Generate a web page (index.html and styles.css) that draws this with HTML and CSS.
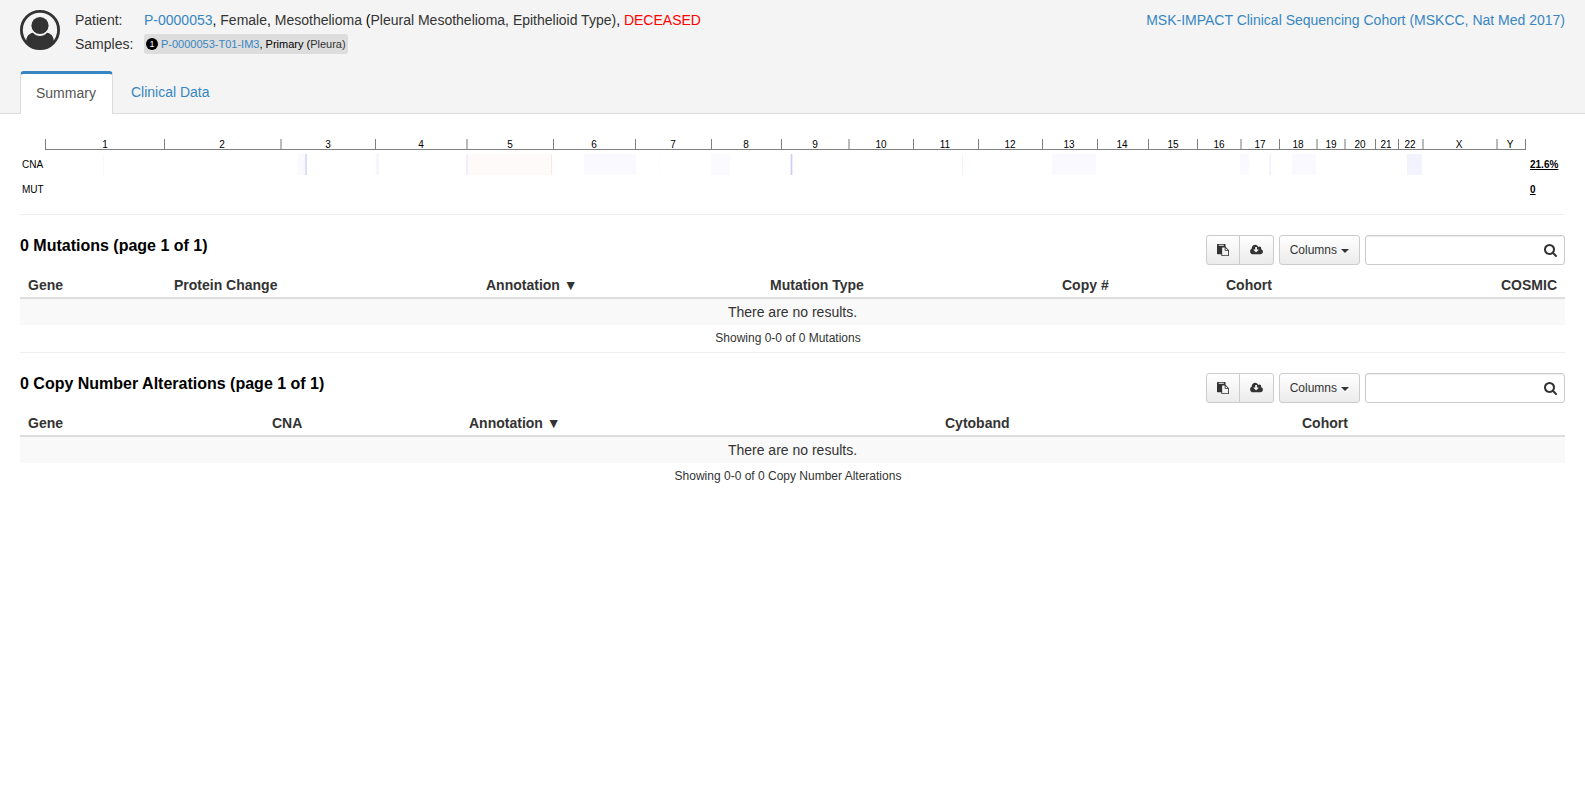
FILE: index.html
```html
<!DOCTYPE html>
<html lang="en">
<head>
<meta charset="utf-8">
<title>Patient P-0000053</title>
<link rel="stylesheet" href="styles.css">
</head>
<body>
<svg class="sprite" aria-hidden="true">
  <symbol id="i-paste" viewBox="0 0 1792 1792"><path d="M768 1664h896v-640h-416q-40 0-68-28t-28-68v-416h-384v1152zm256-1440v-64q0-13-9.500-22.500t-22.500-9.500h-704q-13 0-22.500 9.500t-9.500 22.500v64q0 13 9.500 22.500t22.500 9.500h704q13 0 22.500-9.500t9.500-22.500zm256 672h299l-299-299v299zm512 128v672q0 40-28 68t-68 28h-960q-40 0-68-28t-28-68v-160h-544q-40 0-68-28t-28-68v-1344q0-40 28-68t68-28h1088q40 0 68 28t28 68v328q21 13 36 28l408 408q28 28 48 76t20 88z"/></symbol>
  <symbol id="i-cloud" viewBox="0 128 1920 1792"><path d="M1280 992q0-14-9-23t-23-9h-224v-352q0-13-9.500-22.500t-22.500-9.500h-192q-13 0-22.500 9.500t-9.500 22.500v352h-224q-13 0-22.500 9.500t-9.500 22.500q0 14 9 23l352 352q9 9 23 9t23-9l351-351q10-12 10-24zm640 288q0 159-112.500 271.500t-271.500 112.500h-1088q-185 0-316.500-131.500t-131.500-316.500q0-130 70-240t188-165q-2-30-2-43 0-212 150-362t362-150q156 0 285.500 87t188.500 231q71-62 166-62 106 0 181 75t75 181q0 76-41 138 130 31 213.500 135.500t83.500 238.500z"/></symbol>
  <symbol id="i-search" viewBox="0 0 1664 1664"><path d="M1152 704q0-185-131.500-316.500t-316.500-131.500-316.500 131.500-131.500 316.500 131.500 316.500 316.500 131.500 316.500-131.500 131.500-316.500zm512 832q0 52-38 90t-90 38q-54 0-90-38l-343-342q-179 124-399 124-143 0-273.500-55.500t-225-150-150-225-55.500-273.500 55.500-273.500 150-225 225-150 273.500-55.500 273.500 55.500 225 150 150 225 55.500 273.500q0 220-124 399l343 343q37 37 37 90z"/></symbol>
</svg>

<header class="page-header">
  <div class="patient">
    <svg class="avatar" viewBox="0 0 40 40" aria-hidden="true">
      <defs><clipPath id="disc"><circle cx="20" cy="20" r="19"/></clipPath></defs>
      <circle class="avatar-ring" cx="20" cy="20" r="18.600"/>
      <circle cx="20" cy="15.500" r="8.600"/>
      <path clip-path="url(#disc)" d="M6 36V32C6.500 26 9 23.500 13 22.800C15 25 17.500 26 20 26S25 25 27 22.800C31 23.500 33.500 26 34 32V36L28 40H12Z"/>
    </svg>
    <dl class="facts">
      <dt>Patient:</dt>
      <dd><a href="#">P-0000053</a><b class="punct">, </b>Female<b class="punct">, </b>Mesothelioma <b class="punct">(</b>Pleural Mesothelioma, Epithelioid Type)<b class="punct">, </b><span class="deceased">DECEASED</span></dd>
      <dt>Samples:</dt>
      <dd><span class="sample"><svg class="sample-dot" viewBox="0 0 12 12"><circle cx="6" cy="6" r="6"/><text x="6" y="9">1</text></svg><span><a href="#">P-0000053-T01-IM3</a>, Primary (<span class="site">Pleura)</span></span></span></dd>
    </dl>
    <a class="study" href="#">MSK-IMPACT Clinical Sequencing Cohort (MSKCC, Nat Med 2017)</a>
  </div>
  <nav class="tabs">
    <a class="tab active" href="#">Summary</a>
    <a class="tab" href="#">Clinical Data</a>
  </nav>
</header>

<main>
  <svg class="genome" viewBox="0 0 1545 80" role="img" aria-label="Genome overview">
    <g class="ticks">
      <path d="M25 5h1v10h-1zM144 5h1v10h-1zM355 5h1v10h-1zM533 5h1v10h-1zM615 5h1v10h-1zM691 5h1v10h-1zM761 5h1v10h-1zM893 5h1v10h-1zM958 5h1v10h-1zM1022 5h1v10h-1zM1077 5h1v10h-1zM1128 5h1v10h-1zM1177 5h1v10h-1zM1259 5h1v10h-1zM1355 5h1v10h-1zM1378 5h1v10h-1zM1505 5h1v10h-1z"/>
      <path d="M25 15h1481v1H25z"/>
      <path class="soft" d="M260 5h2v10h-2zM446 5h2v10h-2zM828 5h2v10h-2zM1220 5h2v10h-2zM1296 5h2v10h-2zM1324 5h2v10h-2zM1402 5h2v10h-2zM1476 5h2v10h-2z"/>
    </g>
    <g class="chromosomes">
      <text x="85" y="14">1</text><text x="202" y="14">2</text><text x="308" y="14">3</text><text x="401" y="14">4</text><text x="490" y="14">5</text><text x="574" y="14">6</text><text x="653" y="14">7</text><text x="726" y="14">8</text><text x="795" y="14">9</text><text x="861" y="14">10</text><text x="925" y="14">11</text><text x="990" y="14">12</text><text x="1049" y="14">13</text><text x="1102" y="14">14</text><text x="1153" y="14">15</text><text x="1199" y="14">16</text><text x="1240" y="14">17</text><text x="1278" y="14">18</text><text x="1311" y="14">19</text><text x="1340" y="14">20</text><text x="1366" y="14">21</text><text x="1390" y="14">22</text><text x="1439" y="14">X</text><text x="1490" y="14">Y</text>
    </g>
    <text x="2" y="34">CNA</text>
    <text x="2" y="59">MUT</text>
    <g>
      <rect x="83" y="20" width="1" height="21" fill="#f8f8fc"/>
      <rect x="278" y="20" width="7" height="21" fill="#f9f9ff"/>
      <rect x="285" y="20" width="2" height="21" fill="#dcdcfc"/>
      <rect x="356" y="20" width="3" height="21" fill="#f6f6ff"/>
      <rect x="446" y="20" width="2" height="21" fill="#f1effd"/>
      <rect x="448" y="20" width="83" height="21" fill="#fefaf9"/>
      <rect x="531" y="20" width="1" height="21" fill="#fbe6e9"/>
      <rect x="564" y="20" width="52" height="21" fill="#f9f9ff"/>
      <rect x="639" y="20" width="1" height="21" fill="#fafaff"/>
      <rect x="691" y="20" width="19" height="21" fill="#fbfbff"/>
      <rect x="770" y="20" width="3" height="21" fill="#ededff"/>
      <rect x="771" y="20" width="1" height="21" fill="#ccccf6"/>
      <rect x="942" y="20" width="1" height="21" fill="#fdf0f1"/>
      <rect x="1032" y="20" width="44" height="21" fill="#f9f9ff"/>
      <rect x="1220" y="20" width="9" height="21" fill="#f9f9ff"/>
      <rect x="1249" y="20" width="2" height="21" fill="#f3f3ff"/>
      <rect x="1272" y="20" width="24" height="21" fill="#f9f9ff"/>
      <rect x="1387" y="20" width="15" height="21" fill="#f3f3ff"/>
    </g>
    <g class="totals"><text x="1510" y="34">21.6%</text><text x="1510" y="59">0</text></g>
  </svg>

  <section class="panel">
    <div class="panel-bar">
      <h2>0 Mutations (page 1 of 1)</h2>
      <div class="tools">
        <div class="group">
          <button type="button" class="btn" aria-label="Copy"><svg class="icon"><use href="#i-paste"/></svg></button>
          <button type="button" class="btn" aria-label="Download"><svg class="icon wide"><use href="#i-cloud"/></svg></button>
        </div>
        <button type="button" class="btn">Columns <span class="caret"></span></button>
        <label class="search"><input type="text" aria-label="Search mutations"><svg class="icon glass"><use href="#i-search"/></svg></label>
      </div>
    </div>
    <table>
      <colgroup><col style="width:146px"><col style="width:312px"><col style="width:284px"><col style="width:292px"><col style="width:164px"><col style="width:165px"><col style="width:182px"></colgroup>
      <thead><tr><th>Gene</th><th>Protein Change</th><th>Annotation ▼</th><th>Mutation Type</th><th>Copy #</th><th>Cohort</th><th class="end">COSMIC</th></tr></thead>
      <tbody><tr><td colspan="7">There are no results.</td></tr></tbody>
    </table>
    <p class="showing">Showing 0-0 of 0 Mutations</p>
  </section>

  <section class="panel">
    <div class="panel-bar">
      <h2>0 Copy Number Alterations (page 1 of 1)</h2>
      <div class="tools">
        <div class="group">
          <button type="button" class="btn" aria-label="Copy"><svg class="icon"><use href="#i-paste"/></svg></button>
          <button type="button" class="btn" aria-label="Download"><svg class="icon wide"><use href="#i-cloud"/></svg></button>
        </div>
        <button type="button" class="btn">Columns <span class="caret"></span></button>
        <label class="search"><input type="text" aria-label="Search copy number alterations"><svg class="icon glass"><use href="#i-search"/></svg></label>
      </div>
    </div>
    <table>
      <colgroup><col style="width:244px"><col style="width:197px"><col style="width:476px"><col style="width:357px"><col style="width:271px"></colgroup>
      <thead><tr><th>Gene</th><th>CNA</th><th>Annotation ▼</th><th>Cytoband</th><th>Cohort</th></tr></thead>
      <tbody><tr><td colspan="5">There are no results.</td></tr></tbody>
    </table>
    <p class="showing">Showing 0-0 of 0 Copy Number Alterations</p>
  </section>
</main>
</body>
</html>
```

FILE: styles.css
```css
* {
  box-sizing: border-box;
}

body {
  margin: 0;
  background: #fff;
  color: #333;
  font: 14px/20px "Liberation Sans", Arial, sans-serif;
}

a {
  color: #3786c2;
  text-decoration: none;
}

.sprite {
  display: none;
}

.page-header {
  padding: 10px 20px 0;
  background: #f4f4f4;
  border-bottom: 1px solid #ddd;
}

.patient {
  display: flex;
  align-items: flex-start;
}

.avatar {
  width: 40px;
  height: 40px;
  margin-right: 15px;
  fill: #333;
}

.avatar-ring {
  fill: none;
  stroke: #333;
  stroke-width: 2.8;
}

.facts {
  display: grid;
  grid-template-columns: 69px auto;
  row-gap: 4px;
  margin: 0;
}

.facts dd {
  margin: 0;
}

.punct {
  color: #000;
  font-weight: normal;
}

.deceased {
  color: #f00;
}

.sample {
  display: inline-flex;
  align-items: center;
  gap: 3px;
  height: 20px;
  padding: 0 2px;
  border-radius: 3px;
  background: #ddd;
  color: #000;
  font-size: 11px;
  vertical-align: top;
}

.sample-dot {
  width: 12px;
  height: 12px;
}

.sample-dot text {
  fill: #fff;
  font-size: 9px;
  text-anchor: middle;
}

.site {
  color: #333;
}

.study {
  margin-left: auto;
}

.tabs {
  display: flex;
  gap: 2px;
  margin: 17px 0 -1px;
}

.tab {
  padding: 11px 16px 12px;
}

.tab.active {
  padding: 9px 16px 11px 15px;
  border: 1px solid #ddd;
  border-top: 3px solid #3786c2;
  border-bottom: 0;
  border-radius: 4px 4px 0 0;
  background: #fff;
  color: #555;
}

main {
  padding: 20px 20px 0;
}

.genome {
  display: block;
  width: 100%;
  height: auto;
  font-size: 10px;
}

.ticks {
  fill: #808080;
}

.ticks .soft {
  fill: #bbb;
}

.chromosomes {
  text-anchor: middle;
}

.totals {
  font-weight: bold;
  text-decoration: underline;
}

.panel {
  border-top: 1px solid #eee;
  padding-top: 20px;
}

.panel-bar {
  display: flex;
  justify-content: space-between;
  margin-bottom: 6px;
}

h2 {
  margin: 0;
  color: #000;
  font-size: 16px;
  line-height: 22px;
}

.tools {
  display: flex;
  gap: 5px;
}

.group {
  display: flex;
}

.btn {
  display: flex;
  align-items: center;
  gap: 4px;
  height: 30px;
  padding: 0 10px;
  border: 1px solid #ccc;
  border-radius: 3px;
  background: linear-gradient(#fff, #ebebeb);
  color: #333;
  font: 12px/18px "Liberation Sans", Arial, sans-serif;
}

.group .btn:first-child {
  border-radius: 3px 0 0 3px;
}

.group .btn:last-child {
  margin-left: -1px;
  border-radius: 0 3px 3px 0;
}

.icon {
  width: 12px;
  height: 12px;
  fill: #333;
}

.icon.wide {
  width: 13px;
}

.caret {
  margin-top: 2px;
  border: 4px solid transparent;
  border-top-color: #333;
  border-bottom: 0;
}

.search {
  position: relative;
  width: 200px;
}

.search input {
  width: 100%;
  height: 30px;
  padding: 0 30px 0 10px;
  border: 1px solid #ccc;
  border-radius: 3px;
  box-shadow: inset 0 1px 1px rgba(0, 0, 0, 0.075);
  font: inherit;
}

.icon.glass {
  position: absolute;
  top: 9px;
  right: 8px;
  width: 13px;
  height: 13px;
}

table {
  width: 100%;
  table-layout: fixed;
  border-collapse: separate;
  border-spacing: 0;
}

th {
  padding: 4px 8px 2px;
  border-bottom: 2px solid #ddd;
  text-align: left;
}

th.end {
  text-align: right;
}

td {
  padding: 3px 8px;
  background: #f9f9f9;
  text-align: center;
}

.showing {
  margin: 0;
  padding: 3px 9px 4px 0;
  font-size: 12px;
  text-align: center;
}
```
